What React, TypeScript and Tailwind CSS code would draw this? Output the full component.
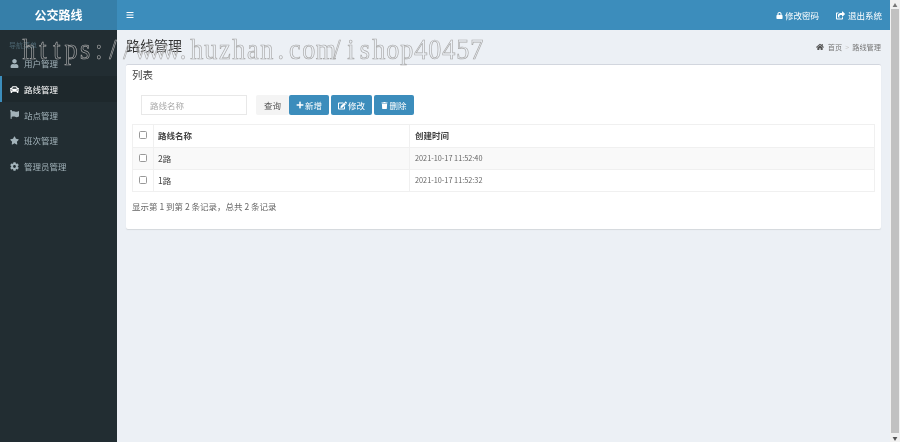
import { FaBars, FaCar, FaCog, FaEdit, FaFlag, FaHome, FaLock, FaPlus, FaShareSquare, FaStar, FaTrash, FaUser } from 'react-icons/fa'

const menu = [
  { label: '用户管理', icon: FaUser },
  { label: '路线管理', icon: FaCar, active: true },
  { label: '站点管理', icon: FaFlag },
  { label: '班次管理', icon: FaStar },
  { label: '管理员管理', icon: FaCog },
]

const rows = [
  { name: '2路', time: '2021-10-17 11:52:40', striped: true },
  { name: '1路', time: '2021-10-17 11:52:32' },
]

const watermark = 'https://www.huzhan.com/ishop40457'.split('')

function Checkbox() {
  return <span className="mb-[2px] block h-[8px] w-[8px] rounded-[1.5px] border border-[#999] bg-white" />
}

export default function App() {
  return (
    <div className="relative flex h-[442px] w-[900px] overflow-hidden bg-[#ecf0f5] font-['Noto_Sans_CJK_SC','Liberation_Sans',sans-serif] text-[8.5px] text-[#444] blur-[0.35px]">
      <div className="flex min-w-0 flex-1 flex-col">
        <header className="flex h-[30px] shrink-0 text-white">
          <div className="flex w-[117px] shrink-0 items-center justify-center bg-[#367fa9] text-[12px] font-bold">公交路线</div>
          <div className="flex flex-1 items-center justify-between bg-[#3c8dbc] pl-[9px] pr-[8px]">
            <FaBars className="h-[8px] w-[8px]" />
            <div className="flex items-center gap-[17px]">
              <span className="flex items-center gap-[2px]"><FaLock className="h-[7px] w-[7px]" />修改密码</span>
              <span className="flex items-center gap-[3px]"><FaShareSquare className="h-[9px] w-[9px]" />退出系统</span>
            </div>
          </div>
        </header>

        <div className="flex min-h-0 flex-1">
          <aside className="w-[117px] shrink-0 bg-[#222d32] text-[#a3b3ba]">
            <div className="flex h-[20.5px] items-end pl-[9px] text-[7px] text-[#4b646f]">导航菜单</div>
            <ul>
              {menu.map((item) => (
                <li
                  key={item.label}
                  className={`flex h-[25.8px] items-center gap-[5px] border-l-2 pl-[8px] ${item.active ? 'border-[#3c8dbc] bg-[#1e282c] text-white' : 'border-transparent'}`}
                >
                  <item.icon className="h-[9px] w-[9px]" />
                  <span>{item.label}</span>
                </li>
              ))}
            </ul>
          </aside>

          <main className="min-w-0 flex-1 px-[9px]">
            <div className="flex h-[34px] items-center justify-between pb-[4px]">
              <h1 className="text-[14px] leading-none text-[#333]">路线管理</h1>
              <div className="mt-[4px] flex items-center gap-[3px] text-[7.2px] text-[#777]">
                <FaHome className="h-[8px] w-[8px] text-[#555]" />
                <span className="ml-[1px]">首页</span>
                <span className="text-[#ccc]">&gt;</span>
                <span>路线管理</span>
              </div>
            </div>

            <section className="h-[165px] rounded-[2px] border-t border-[#d2d6de] bg-white px-[6px] shadow-[0_1px_1px_rgba(0,0,0,0.1)]">
              <h2 className="pt-[2px] text-[10.5px] leading-[15px] text-[#444]">列表</h2>

              <div className="mt-[13px] flex items-center pl-[9px]">
                <input
                  readOnly
                  placeholder="路线名称"
                  className="h-[20px] w-[106px] border border-[#e8e8e8] bg-white px-[8px] text-[8.5px] placeholder:text-[#aaa]"
                />
                <button className="ml-[9px] h-[20px] w-[33px] rounded-[2px] bg-[#f4f4f4] text-[8.5px] text-[#555]">查询</button>
                <button className="flex h-[20px] w-[40px] items-center justify-center gap-[1px] rounded-[2px] bg-[#3c8dbc] text-[8.5px] text-white">
                  <FaPlus className="h-[8px] w-[8px]" />新增
                </button>
                <button className="ml-[2px] flex h-[20px] w-[41px] items-center justify-center gap-[1px] rounded-[2px] bg-[#3c8dbc] text-[8.5px] text-white">
                  <FaEdit className="h-[9px] w-[9px]" />修改
                </button>
                <button className="ml-[2px] flex h-[20px] w-[40px] items-center justify-center gap-[1px] rounded-[2px] bg-[#3c8dbc] text-[8.5px] text-white">
                  <FaTrash className="h-[7px] w-[7px]" />删除
                </button>
              </div>

              <table className="mt-[9px] w-[743px] table-fixed border-collapse border border-[#f0f0f0]">
                <thead>
                  <tr className="h-[23px]">
                    <th className="w-[21px] border border-[#f0f0f0] pl-[6px] font-normal"><Checkbox /></th>
                    <th className="w-[256px] border border-[#f0f0f0] pb-[1px] pl-[4px] text-left font-bold">路线名称</th>
                    <th className="border border-[#f0f0f0] pb-[1px] pl-[5px] text-left font-bold">创建时间</th>
                  </tr>
                </thead>
                <tbody>
                  {rows.map((row) => (
                    <tr key={row.name} className={`h-[22px] ${row.striped ? 'bg-[#f9f9f9]' : 'bg-white'}`}>
                      <td className="border border-[#f0f0f0] pl-[6px]"><Checkbox /></td>
                      <td className="border border-[#f0f0f0] pl-[4px]">{row.name}</td>
                      <td className="border border-[#f0f0f0] pl-[5px] text-[7.3px] text-[#666]">{row.time}</td>
                    </tr>
                  ))}
                </tbody>
              </table>

              <p className="mt-[8px] text-[#666]">显示第 1 到第 2 条记录，总共 2 条记录</p>
            </section>
          </main>
        </div>
      </div>

      <div className="flex w-[10px] shrink-0 flex-col items-center bg-[#f1f1f1]">
        <span className="h-[9px] text-[5px] leading-[9px] text-[#777]">▲</span>
        <div className="w-[8px] flex-1 bg-[#c1c1c1]" />
        <span className="h-[9px] text-[5px] leading-[9px] text-[#555]">▼</span>
      </div>

      <div className="pointer-events-none absolute left-[22px] top-[32px] flex origin-left scale-x-[0.9] whitespace-nowrap font-['Liberation_Serif',serif] text-[29px] leading-[34px] text-transparent [-webkit-text-stroke:0.7px_#a8a8a8]">
        {watermark.map((ch, i) => (
          <span key={i} className="w-[15.55px] shrink-0 text-center">{ch}</span>
        ))}
      </div>
    </div>
  )
}
